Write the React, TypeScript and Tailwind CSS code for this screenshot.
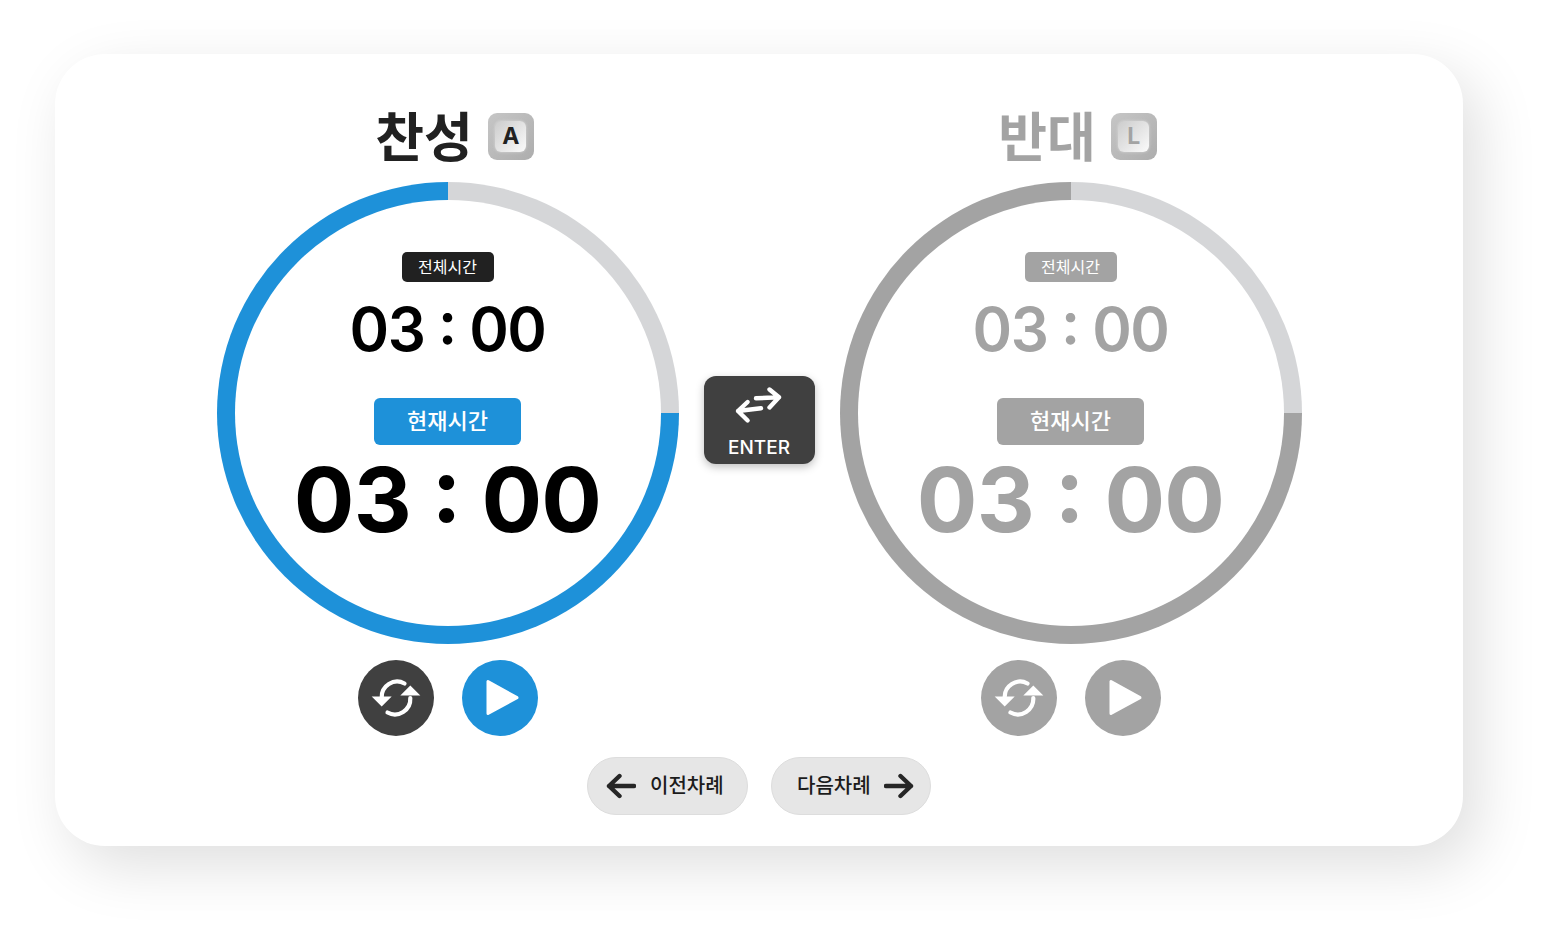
import React from "react";

const fontStack = "font-['Inter','Noto_Sans_CJK_KR',sans-serif]";

function RefreshIcon() {
  return (
    <svg width="76" height="76" viewBox="0 0 76 76" fill="none">
      <path d="M46.5 23.5A15.5 15.5 0 0 0 23.7 38" stroke="#fff" strokeWidth="4.2" strokeLinecap="round" />
      <path d="M13.7 36.5H33.7L23.7 46.5Z" fill="#fff" />
      <path d="M29.5 52.5A15.5 15.5 0 0 0 52.3 38" stroke="#fff" strokeWidth="4.2" strokeLinecap="round" />
      <path d="M42.3 35.5H62.3L52.3 25.5Z" fill="#fff" />
    </svg>
  );
}

function PlayIcon() {
  return (
    <svg width="76" height="76" viewBox="0 0 76 76">
      <path d="M26 21.5V53.5L55 37.6Z" fill="#fff" stroke="#fff" strokeWidth="3" strokeLinejoin="round" />
    </svg>
  );
}

function SwapIcon() {
  return (
    <svg width="60" height="48" viewBox="0 0 60 48" fill="none" stroke="#fff" strokeWidth="4.4" strokeLinecap="round" strokeLinejoin="round">
      <path d="M27 13.3L50 12.3M40.5 4.5L50 12.3L40.5 22.5" />
      <path d="M32 23.3L9 26M18.6 17L9 26L18.6 35.5" />
    </svg>
  );
}

function NavArrow({ dir }: { dir: "left" | "right" }) {
  return (
    <svg width="30" height="26" viewBox="0 0 30 26" fill="none" stroke="#262626" strokeWidth="4.4" strokeLinecap="round" strokeLinejoin="round">
      {dir === "left" ? <path d="M28 13H3M13.5 3L3 13L13.5 23" /> : <path d="M2 13H27M16.5 3L27 13L16.5 23" />}
    </svg>
  );
}

function KeyCap({ label, active }: { label: string; active: boolean }) {
  return (
    <div className="w-[46px] h-[47px] rounded-[9px] bg-gradient-to-br from-[#c6c6c6] to-[#adadad] flex items-center justify-center">
      <div className="w-[31px] h-[31px] rounded-[6px] bg-gradient-to-br from-[#cccccc] to-[#fbfbfb] shadow-[0_0_3px_rgba(225,225,225,0.8)] flex items-center justify-center">
        <span className={`text-[23px] font-bold leading-none ${active ? "text-[#212121]" : "text-[#a3a3a3]"}`}>{label}</span>
      </div>
    </div>
  );
}

function Side({ title, keyLabel, active }: { title: string; keyLabel: string; active: boolean }) {
  const ring = active
    ? "bg-[conic-gradient(#d5d6d8_0_25%,#1e91d9_25%_100%)]"
    : "bg-[conic-gradient(#d5d6d8_0_25%,#a3a3a3_25%_100%)]";
  const ink = active ? "text-black" : "text-[#a3a3a3]";
  return (
    <div className="flex flex-col items-center w-[462px]">
      <div className="flex items-center gap-[15px] h-[47px] ml-[14px]">
        <span className={`text-[53px] font-bold leading-none mt-[4px] ${active ? "text-[#212121]" : "text-[#a3a3a3]"}`}>{title}</span>
        <KeyCap label={keyLabel} active={active} />
      </div>
      <div className={`mt-[22px] w-[462px] h-[462px] rounded-full p-[18px] ${ring}`}>
        <div className={`w-full h-full rounded-full bg-white flex flex-col items-center pt-[52px] ${ink}`}>
          <div className={`w-[92px] h-[30px] rounded-[5px] flex items-center justify-center text-white text-[16px] leading-none ${active ? "bg-[#212121]" : "bg-[#a3a3a3]"}`}>전체시간</div>
          <div className="mt-[9px] text-[60px] font-semibold leading-[76px] tracking-[-1.5px] [font-feature-settings:'calt'_1]">03 : 00</div>
          <div className={`mt-[31px] w-[147px] h-[47px] rounded-[6px] flex items-center justify-center pb-[2px] text-white text-[22px] font-medium leading-none ${active ? "bg-[#1e91d9]" : "bg-[#a3a3a3]"}`}>현재시간</div>
          <div className="mt-0 text-[90px] font-bold leading-[110px] tracking-[-0.75px] [font-feature-settings:'calt'_1]">03 : 00</div>
        </div>
      </div>
      <div className="mt-[16px] flex gap-[28px]">
        <div className={`w-[76px] h-[76px] rounded-full ${active ? "bg-[#404040]" : "bg-[#a3a3a3]"}`}><RefreshIcon /></div>
        <div className={`w-[76px] h-[76px] rounded-full ${active ? "bg-[#1e91d9]" : "bg-[#a3a3a3]"}`}><PlayIcon /></div>
      </div>
    </div>
  );
}

export default function App() {
  return (
    <div className={`min-h-[933px] bg-white pt-[54px] pl-[55px] ${fontStack}`}>
      <div className="w-[1408px] h-[792px] rounded-[50px] bg-white shadow-[15px_20px_60px_rgba(0,0,0,0.13)] flex flex-col items-center pt-[59px]">
        <div className="flex items-start">
          <Side title="찬성" keyLabel="A" active />
          <div className="mx-[25px] mt-[263px] w-[111px] h-[88px] rounded-[12px] bg-[#404040] shadow-[0_3px_8px_rgba(0,0,0,0.25)] flex flex-col items-center pt-[9px]">
            <SwapIcon />
            <span className="mt-[3px] text-white text-[19px] font-medium leading-[24px]">ENTER</span>
          </div>
          <Side title="반대" keyLabel="L" active={false} />
        </div>
        <div className="mt-[21px] flex gap-[23px]">
          <div className="w-[161px] h-[58px] rounded-full bg-[#e6e6e6] border border-[#dddddd] flex items-center pl-[18px] gap-[14px] text-[20px] font-medium text-[#1c1c1c]">
            <NavArrow dir="left" />
            <span>이전차례</span>
          </div>
          <div className="w-[160px] h-[58px] rounded-full bg-[#e6e6e6] border border-[#dddddd] flex items-center pl-[25px] gap-[13px] text-[20px] font-medium text-[#1c1c1c]">
            <span>다음차례</span>
            <NavArrow dir="right" />
          </div>
        </div>
      </div>
    </div>
  );
}
